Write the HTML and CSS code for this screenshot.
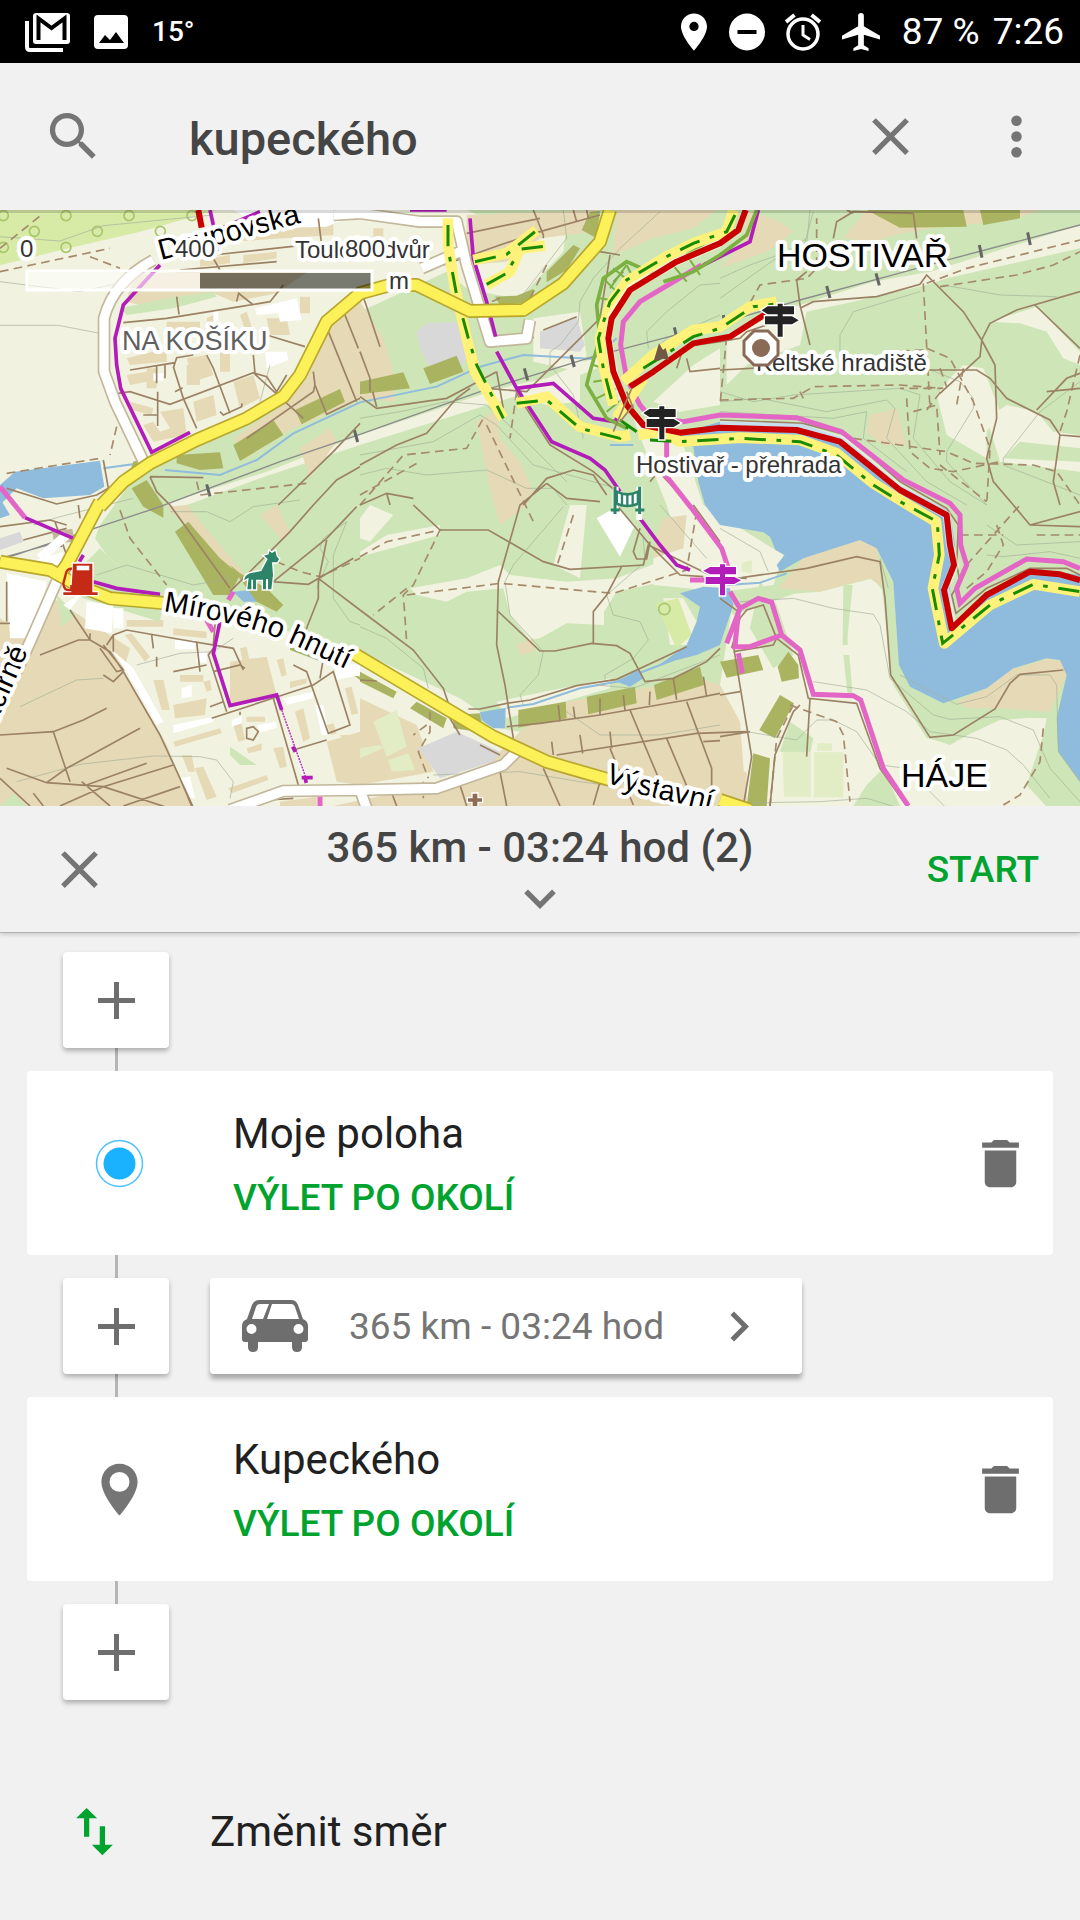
FILE: index.html
```html
<!DOCTYPE html>
<html lang="cs">
<head>
<meta charset="utf-8">
<meta name="viewport" content="width=device-width, initial-scale=1">
<title>Plánování trasy</title>
<link rel="stylesheet" href="styles.css">
</head>
<body>
<div class="status">
  <svg class="s-mail" viewBox="0 0 46 40" aria-hidden="true"><path d="M2 9v26q0 3 3 3h33" fill="none" stroke="#fff" stroke-width="4"/><rect x="8" y="1" width="37" height="31" rx="3" fill="#fff"/><path d="M13.500 28V6.500L26.500 16 39.500 6.500V28" fill="none" stroke="#000" stroke-width="4"/></svg>
  <svg class="s-image" viewBox="0 0 34 34" aria-hidden="true"><rect width="34" height="34" rx="4" fill="#fff"/><path d="M5 28l6-8 5 5 6-8 8 11z"/></svg>
  <span class="temp">15°</span>
  <div class="status-right">
    <svg class="s-pin" viewBox="5 2 14 20" aria-hidden="true"><path fill="#fff" d="M12 2C8.130 2 5 5.130 5 9c0 5.250 7 13 7 13s7-7.750 7-13c0-3.870-3.130-7-7-7zm0 9.500a2.500 2.500 0 1 1 0-5 2.500 2.500 0 0 1 0 5z"/></svg>
    <svg class="s-dnd" viewBox="0 0 36 38" aria-hidden="true"><ellipse cx="18" cy="19" rx="18" ry="18.500" fill="#fff"/><path d="M8.500 19h19" stroke="#000" stroke-width="4"/></svg>
    <svg class="s-alarm" viewBox="0 0 36 38" aria-hidden="true"><g fill="none" stroke="#fff"><circle cx="18" cy="21" r="15" stroke-width="3.500"/><path d="M18 12v10l7 4.500" stroke-width="3"/><path d="M1 9l8.500-7M35 9l-8.500-7" stroke-width="4"/></g></svg>
    <svg class="s-plane" viewBox="2 2 20 20" aria-hidden="true"><path fill="#fff" d="M22 16v-2l-8.500-5V3.500a1.500 1.500 0 0 0-3 0V9L2 14v2l8.500-2.500V19L8 20.500V22l4-1 4 1v-1.500L13.500 19v-5.500z"/></svg>
    <span class="battery">87 %</span>
    <span>7:26</span>
  </div>
</div>

<form class="search" role="search">
  <svg class="icon" viewBox="0 0 24 24" aria-hidden="true"><path d="M15.500 14h-.79l-.28-.27A6.470 6.470 0 0 0 16 9.500 6.500 6.500 0 1 0 9.500 16c1.610 0 3.090-.59 4.230-1.570l.27.28v.79l5 4.990L20.490 19l-4.990-5zm-6 0a4.500 4.500 0 1 1 0-9 4.500 4.500 0 0 1 0 9z"/></svg>
  <input class="query" type="text" value="kupeckého" aria-label="Hledat">
  <button type="button" class="plain" aria-label="Smazat"><svg class="icon" viewBox="0 0 24 24"><path d="M19 6.410L17.590 5 12 10.590 6.410 5 5 6.410 10.590 12 5 17.590 6.410 19 12 13.410 17.590 19 19 17.590 13.410 12z"/></svg></button>
  <button type="button" class="plain" aria-label="Více"><svg class="icon" viewBox="0 0 24 24"><circle cx="12" cy="6" r="2"/><circle cx="12" cy="12" r="2"/><circle cx="12" cy="18" r="2"/></svg></button>
</form>

<main>
<svg class="map" viewBox="0 0 1080 596" role="img" aria-label="Mapa">
<defs>
  <path id="p-doup" d="M161 50L300 13"/>
  <path id="p-mir" d="M163 401Q196 406 227 413T280 429 352 462"/>
  <path id="p-vys" d="M604 571Q635 584 664 590T730 606"/>
  <path id="p-sta" d="M-14 535Q16 470 36 422"/>
</defs>
<g transform="scale(.33333) translate(0 -15)">
  <rect class="forest" y="15" width="3240" height="1800"/>
  <!-- open land -->
  <g class="land">
    <path d="M0 180L480 60 640 15H1400L1500 60 1700 60 1690 140 1560 280 1490 270 1400 250 1340 200 1080 320 990 380 900 560 720 640 450 760 380 850 300 960 285 1000 320 1050 400 1130 480 1190 800 1260 1080 1340 1440 1560 1560 1580 2100 1440 2200 1700 2300 1815H0z"/>
    <path d="M500 895L800 800 1080 690 1500 550 1640 520 1800 450 1840 470 1740 510 1740 590 1640 600 1560 570 1080 720 780 820 520 915z"/>
    <path d="M1600 340L1740 320 1760 450 1740 500 1600 470z"/>
    <path d="M1080 1040L1160 990 1320 960V990L1080 1055zM1110 900L1180 930 1110 1010 1080 1000V940z"/>
    <path d="M1230 1150L1400 1120 1500 1080 1530 1110 1700 1130 1850 1120 1980 1070 1990 1130 1850 1160 1812 1220V1260L1700 1255 1620 1300 1590 1305 1530 1230 1510 1150 1400 1160 1340 1190 1250 1170z"/>
    <path d="M1710 900H1760L1740 1120 1660 1080z"/>
    <path d="M1900 640L2040 690 2110 900 2350 1050 2320 1140 2170 1160 1960 1140 1960 1060 2030 1000 2000 900 1960 800z"/>
    <path d="M1990 1180L2050 1180 2090 1250 2060 1320 2010 1320z"/>
    <path d="M2200 1180L2460 1160 2620 1120 2650 1160 2670 1420 2790 1600 2850 1620 3000 1535 3140 1540 3120 1650 3080 1740 3150 1815H2160V1440z"/>
    <path d="M2400 300L2620 230 2790 200 3240 60V130L2840 220 2780 240 2560 290 2420 320 2400 420 2240 480 2180 540V400L2340 320z"/>
    <path d="M2970 350L3110 305 3240 440V480L3190 460 3140 380 3060 355zM2890 480L2950 490 3000 620 2960 680 2960 760 2840 690 2810 570 2850 520zM2960 640L3020 600 3110 620 3160 680 3240 690V730L3060 710 3010 760 3240 770V800L3000 770z"/>
    <path d="M2080 480L2160 430V600L2040 620 1960 590z"/>
    <path d="M1490 1490L1830 1420 1830 1450 1520 1540zM1080 1340L1380 1480 1440 1520 1440 1560z"/>
  </g>
  <path class="orchard" d="M0 15H650L420 80 160 140 0 180z"/>
  <path class="orchard" d="M1965 1195L2035 1180 2075 1290 2030 1330z"/>
  <!-- built-up areas -->
  <g class="tan">
    <path d="M0 1240L80 1300 160 1180 390 1330 370 1400 500 1620 580 1815H0z"/>
    <path d="M1440 1700L1560 1580 1650 1500 2100 1420 2160 1440 2220 1550 2240 1815H1500z"/>
    <path d="M980 1610L1080 1580V1480L1250 1560 1300 1700 1080 1740 1010 1730zM1000 1803H2240V1700H1480L1300 1740z"/>
    <path d="M1400 30L1800 15 1780 80 1620 100 1520 170 1400 180z"/>
    <path d="M990 370L1080 290 1150 400 1180 500 1185 590 1080 580 950 640 860 680 740 760 700 700 850 600 920 520z"/>
    <path d="M1840 150L1850 15H2150L2080 70 1960 100z"/>
    <path d="M2240 15L2340 50 2380 80 2300 140 2160 190 2230 110zM2530 100L2600 15H3120L3020 50 2860 60 2700 85 2620 110z"/>
    <path d="M1430 650L1490 615 1500 700 1560 770 1600 860 1580 900 1500 960 1470 850z"/>
    <path d="M2335 1150L2410 1060 2580 1005 2630 1030 2650 1150 2610 1120 2460 1160z"/>
    <path d="M2870 1490L2960 1450 3030 1395 3150 1360 3190 1370 3200 1410 3150 1520 3000 1510 2900 1510z"/>
    <path d="M2610 630L2690 610 2720 720 2650 720 2600 680zM1990 940L2060 930 2050 1030 1960 1060 1970 990zM900 730L990 670 1010 710 930 820zM780 930L830 900 870 980 850 1010z"/>
    <path d="M400 210L640 195H930L830 265 700 290 640 265 420 300 380 290zM1550 1320L1600 1300 1600 1340 1560 1350z"/>
    <path d="M690 1370L800 1355 830 1470 690 1500zM740 60L1000 50V90L700 110z"/>
    <path d="M500 905L560 900 760 1140 700 1110z"/>
  </g>
  <g class="block">
    <path d="M500 350h100v40h-100zM380 460l120-30 0 40-110 10zM560 460l60-10 20 60-60 20zM660 440h30v60h-30zM720 330l20-10 20 60-20 10zM800 340l60 0 10 50-60 0zM900 275h30v50h-30zM380 510l60-10 0 30-50 10zM440 490h30v60h-30zM560 480h40v60h-40zM390 590l70 20-5 20-60-15zM480 620l70-10 10 80-100 20-30-50 30-10 20 30 30-10zM580 590l60-20 10 60-60 20zM700 530l60-20 20 70-60 30z"/>
    <path d="M380 1245h110v20H380zM520 1270l100 10v20l-100-10zM375 1290l20-5 55 70-15 15zM460 1425h30l20 90h-25zM520 1500l100-20-5 50-90 10zM540 1410h70v20h-70zM520 1610l140-40 5 15-140 40zM545 1650h30l10 50h-20zM585 1690l25-5 40 90-30 10zM700 1560l25-5 10 50-20 5zM685 1750l115-40 5 15-110 40zM740 1630l45-15v20l-40 10zM820 1630l30-5 10 60-20 5zM740 1535h55v15h-55zM720 1330l20-5 10 50-20 5zM830 1365l20-5 10 50-15 5zM870 1430l50-10v15l-50 15zM885 1520l25-10 20 90-20 10zM1035 1450l20-5 20 80-20 5zM980 1560l20-5 10 30-15 5zM610 1430l20-5 5 30-15 5zM1020 1590h60v40l-30 10zM1120 70h30v80h-30zM1100 1780h60v20h-60zM840 1790l110-15v28H840z"/>
    <path d="M730 150l100-10v20l-100 15zM600 165l90-15v25l-90 10zM620 340l20-10 10 40-20 10z"/>
  </g>
  <g class="park">
    <path d="M360 310L500 280 640 260 650 275 520 310 380 330zM690 1625L770 1680 720 1680 690 1650zM170 1170L230 1230 185 1265zM0 1803L40 1765 80 1803zM300 1030L380 1110 490 1190 480 1250 250 1180 190 1130 270 1060z"/>
    <path d="M2160 1180L2340 1150 2400 1160 2200 1230zM2280 1130L2330 1200 2380 1350 2320 1390 2250 1270zM2530 1140h28l-15 150 0 30h-15zM2530 1350h18l10 120h-15zM2640 1100L2670 1100 2700 1400 2830 1500 3140 1535 3000 1545 2850 1615 2780 1600 2680 1440zM2340 1640L2370 1550 2440 1600 2430 1650zM2600 1740L2650 1690 2700 1803H2560zM3200 1410L3170 1540 3180 1650 3240 1730V1815H3150L3080 1740 3140 1560z"/>
  </g>
  <g class="field">
    <path d="M2348 1640h84v135h-80zM2442 1642h88v135h-88zM2452 1615h44v22h-44zM1120 1550l70-35 30 110-60 30zM1165 1665l60-20 20 50-70 5zM1080 1630l60-10 10 10-70 30zM2225 1075l30-10v40l-30-5z"/>
  </g>
  <!-- water -->
  <g class="water">
    <path d="M1990 700L2160 650 2400 655 2530 700 2700 840 2850 920 2865 1020 2850 1150 2855 1270 2960 1180 3100 1090 3240 1110V1730L3175 1640 3170 1540 3200 1410 3180 1365 3140 1360 3040 1390 2960 1450 2830 1495 2730 1445 2697 1380 2680 1130 2630 1030 2580 1005 2410 1060 2340 1100 2330 1080 2354 1050 2326 1034 2310 995 2290 982 2160 960 2115 900 2095 830 2080 725z"/>
    <path d="M2040 1165L2110 1145 2190 1150 2200 1200 2160 1320 2090 1350 2010 1370 1970 1385 2060 1320 2090 1250 2100 1205z"/>
    <path d="M0 840L45 800 300 767 313 845 270 870 130 880 50 850 0 900zM0 880L30 930 0 940zM1440 1522L1517 1508 1515 1570 1480 1570 1445 1545zM1850 1430L1915 1395 1930 1420 1890 1445zM700 1160L750 1155 790 1190 730 1190z"/>
  </g>
  <g class="stream">
    <path d="M495 795L660 810 770 765 880 685 1080 592 1310 545 1440 485 1570 450 1780 462 1850 400M310 790L420 775M1520 1508L1600 1497 1740 1450 1850 1430 2020 1365M2180 1140L2280 1133 2360 1105M1830 720L1900 720"/>
  </g>
  <g class="grey"><path d="M1250 380L1280 355 1390 350 1420 400 1390 480 1290 490 1260 430zM1620 380L1730 335 1755 420 1740 440 1620 430zM1255 1630L1370 1580 1500 1640 1480 1670 1320 1720zM0 1000L60 980 70 1010 0 1035z"/></g>
  <g class="olive">
    <path d="M530 750L660 742 670 790 600 795 530 775zM700 720L820 645 850 690 720 768zM885 615L1020 552 1035 590 905 658zM525 980L565 950 660 1060 720 1110 690 1170 640 1170zM690 1080L720 1105 800 1150 850 1200 830 1220 770 1190zM395 850L440 825 490 900 490 938 430 905zM415 765L440 800 380 830 400 770z"/>
    <path d="M1080 530L1210 502 1230 550 1080 568zM1270 490L1370 452 1390 500 1290 537zM1485 275L1550 272 1600 252 1600 290 1500 300zM1640 200L1720 120 1740 130 1700 195 1640 232zM1770 20L1800 18 1790 100 1745 75zM2600 15L2700 68 2900 65 2890 15zM2940 15L3060 15 3060 40 2950 60z"/>
    <path d="M1080 1400L1190 1460 1180 1480 1080 1430zM1230 1510L1250 1490 1340 1540 1330 1570zM1360 1570L1360 1530 1440 1525 1445 1560 1500 1590zM1555 1515L1697 1490 1700 1540 1555 1568zM1760 1475L1905 1445 1910 1495 1765 1528zM1962 1440L2100 1385 2112 1440 1970 1485zM2160 1370L2275 1350 2290 1395 2180 1418zM2333 1385L2365 1340 2395 1380 2397 1420 2345 1430zM2340 1470L2382 1495 2325 1600 2278 1575zM2260 1645L2310 1660 2300 1803H2240zM870 1320L1000 1370 990 1380 870 1335zM1060 1410L1080 1415V1425z"/>
  </g>
  <g class="hall"><path d="M765 310L890 280 905 345 840 350 835 325 770 330zM795 440L860 440 865 465 800 490zM460 505h30v22h-30zM640 315h15v40h-15zM700 15h400l-120 50-180 5zM75 1075L190 1040 180 1080 90 1085zM20 1105L140 1130 110 1300 30 1300zM260 1190L340 1200 335 1285 255 1270zM340 1210h30v60h-30zM330 1330L400 1390 490 1550 470 1560 380 1400zM520 1560L640 1535 640 1550 520 1585zM545 1450l30-10v35l-30 5zM590 1340h30v35l-30-5zM525 1305h60v28h-60zM850 1480L940 1460V1480L860 1500zM945 1500L970 1500 985 1590 965 1590zM1000 1370L1080 1380V1410L1010 1425zM1790 940L1850 905 1905 960 1860 1055zM770 1560l60-10v18l-50 15zM540 1720L570 1715 585 1780 560 1775zM695 1545l30-10v20l-30 10zM250 1160L190 1200 210 1215zM830 1540L930 1730 915 1740 885 1640z"/></g>
  <g class="rings"><circle cx="10" cy="32" r="15"/><circle cx="198" cy="32" r="15"/><circle cx="387" cy="32" r="15"/><circle cx="576" cy="32" r="15"/><circle cx="103" cy="79" r="15"/><circle cx="292" cy="79" r="15"/><circle cx="481" cy="79" r="15"/><circle cx="10" cy="127" r="15"/><circle cx="198" cy="127" r="15"/><circle cx="1993" cy="1212" r="17"/></g>
  <!-- contours -->
  <g class="contour">
    <path d="M0 95L180 108 310 62 640 30M0 230L240 260 400 225M0 361H175L300 385M60 1505L230 1425 310 1420M50 1730L240 1678 460 1653 600 1655 650 1665 700 1730 690 1780M290 1110L380 1080 580 1140 690 1120M410 1380L540 1345 640 1340M700 1300L640 1340M100 960L180 935 400 880M780 590L810 480M510 920L620 920 690 950 760 905 900 885M1040 950L970 1000 960 1030 985 1070 950 1150M1040 950L1000 1050V1180L1050 1250 1080 1260"/>
    <path d="M1080 750L1300 710 1440 630 1490 660 1600 780 1850 850M1080 810L1160 790 1280 810 1460 795 1580 850 1660 850 1700 900M1080 640L1200 620 1340 590 1460 600 1560 690 1700 830M1690 15L1700 100 1560 280M1980 20L1860 130 1780 220 1740 290 1735 350 1680 420 1650 440 1650 480 1720 570 1750 700M1080 1265L1160 1300 1270 1390 1285 1450M1690 905L1540 1080 1515 1130 1530 1230 1630 1340 1615 1410 1560 1470 1570 1500M1980 900L2120 1060M1930 1000L1935 1070 1820 1170 1840 1230 1920 1250 1945 1305 1900 1360 1815 1410V1430M1790 1440L1900 1450 2160 1350M1300 1710L1560 1700 1740 1730 1850 1745M1700 1520L1800 1590 1980 1590 2160 1560"/>
    <path d="M2160 280L2300 180 2420 100M2160 220L2250 180 2420 120 2430 15M2160 560L2260 590 2380 570 2700 550 2760 570 2740 700 2850 830 2960 900M2160 590L2280 580 2480 620 2660 585 2685 610 2660 700 2780 830 2900 900M2160 620L2500 640 2600 620 2590 700 2720 800M2520 440V390L2560 320 2760 260M2830 240L3000 270 3170 275M2780 490L2880 530 2920 580 2920 610 2840 740V770L2960 900M2960 960L3050 1020 3240 1010M3240 530L3120 620 3010 760V780L3240 870M2440 20L2410 130M1940 460L2000 400 2160 330M1945 430L1940 380 2000 320 2100 240 2160 235M2160 970L2280 1040 2305 1100M2220 1190L2380 1180 2500 1210 2620 1228 2640 1260 2670 1420 2800 1530 2850 1543 3000 1535 3100 1575 3150 1690 3240 1790M2240 1580L2390 1605 2450 1545 2500 1545 2570 1580 2640 1680 2720 1690 2850 1820M2440 1430L2600 1455 2720 1520 2790 1580 2930 1600 3020 1635 3070 1680 3150 1780M2180 1795L2460 1790 2600 1780 2700 1810M2960 1050L3010 1055 3150 1040 3240 1060M2700 1410L2870 1498 2960 1475 3050 1410 3150 1410 3170 1440 3175 1640 3240 1730M2640 1060L2665 1150"/>
  </g>
  <!-- railway -->
  <path class="rail" d="M0 1065L290 968 480 905 840 770 1080 688 1440 560 1780 455 2160 355 2400 285 2660 215 2860 160 3240 60M0 1060L180 1010"/>
  <path class="tick" d="M620 838l10 36M1063 675l10 36M1573 490l10 36M1713 450l10 36M2023 367l8 34M2170 330l4 26M2480 243l10 36M2628 205l10 36M2938 120l8 38M3083 82l8 38M175 990l8 36"/>
  <!-- footpaths -->
  <g class="dash">
    <path d="M0 200L330 130M0 130L130 25M270 155L360 190M20 805L300 760M350 665L330 750M590 830L600 870 920 835M360 915L390 1000 500 1140M830 1070L900 1100 960 1115 1080 1060"/>
    <path d="M1080 900L1210 750 1400 730 1450 640M1460 660L1600 950M1550 560L1530 700M1080 870L1260 770M1640 180L1580 300M1080 1055L1160 1010 1320 975 1240 1140 1210 1170 1220 1310M1220 1170L1500 1135 1840 1165 2060 1095 2090 920M1720 930L1670 1085M1220 1150L1120 1230M1500 280L1450 300"/>
    <path d="M2770 235L2790 610M2780 235L2900 190 3240 105M2820 245L3050 210 3160 180 3240 140M2230 330L2280 240 2420 220 2450 190V40M2160 585L2380 580 2440 545 2700 540 2830 550 2700 550M2410 580L2400 560M2740 620L2810 600 2820 750M2720 580L2730 740 2790 790 2860 800 3000 770M2560 700L2700 720 2840 740 2920 775 3100 780 3170 800 3240 900M2780 615L2830 550M2780 430L2850 460 2920 590 2970 730 2960 900M2770 435L2660 440M2890 490L2870 600M2820 490L2840 545M3240 450L3200 620 3180 680M2820 780L2960 890M2880 990H3010M2990 960L3010 1020 2960 1100 2900 1150M2900 1080L3060 900M3110 990H3240M2370 1500L2510 1550 2530 1590 2550 1790M2380 1500L2330 1600 2310 1803M3130 1570L3120 1670 3060 1770 3010 1800M2180 395L2160 600"/>
    <path d="M1290 1520L1290 1580 1255 1640 1285 1720M1270 1730V1780M1280 1560L1240 1590"/>
  </g>
  <!-- minor roads and tracks -->
  <g class="path">
    <path d="M370 353L500 340 720 305 810 290 850 240M530 275L537 328M640 150L960 115M540 195L830 170M710 290L716 265 760 300M390 495L525 473 530 458 580 450M520 485L550 580 590 670M525 473L520 490M620 450L640 490 690 625M355 565L390 560 510 598 760 503 910 640M470 480V535M473 560V663M430 630H473M800 390L915 425M760 450L765 505 800 515 830 560 860 510M985 380L1070 590M940 500L945 540 940 560 740 700M945 540L980 628 1080 580M1035 330L1075 430M660 620L670 630 725 605 726 595M495 480V520M525 560L548 548M640 160L660 195M955 40L965 120"/>
    <path d="M310 765L325 850 290 870 170 897 20 850M450 815L470 860 510 900M450 815L610 818M510 900L690 1150M835 900L1000 740 1080 655M940 900L1010 825 1080 785M0 965L150 945 200 960M235 900L240 940M1070 905L980 1000 820 1130M940 900L870 980 690 1160M815 1130L925 1138 1060 1060M980 1005L955 1130V1180L900 1320M955 1120L1080 1215M165 950L210 1080M70 1005L200 970"/>
    <path d="M210 1215L270 1305 330 1340 370 1400 480 1590 540 1720 575 1803M120 1350L235 1305H270V1285M320 1320L340 1290 380 1275 550 1305 700 1330 730 1395M300 1330L350 1400 370 1395 310 1320M310 1410L340 1430 370 1400M0 1590L160 1580 250 1545 320 1510M160 1580L210 1730M20 1690L140 1733 310 1745 540 1820M140 1733L200 1690 420 1570M180 1803L310 1745 520 1680M245 1730L330 1803M260 1740L440 1675M370 1803L540 1745M0 1720L90 1803M455 1290L460 1330M470 1355V1385M520 1400L620 1380M540 1720L590 1830M590 1310L600 1400M640 1330L625 1350 680 1520M640 1400L720 1380 735 1390M635 1540L940 1440 1000 1400 1050 1560 985 1585 920 1400 880 1380M820 1480L895 1740M880 1635L980 1605M740 1570l20-5 15 15-15 25-20-5zM970 1360L960 1420M20 1130V1250M0 1255H30M0 1383H40M650 1200L640 1320M340 1290V1340M630 1505L670 1490M720 1520V1530M800 1785L880 1780M100 1765L130 1803"/>
    <path d="M1330 180L1500 120 1620 80 1800 30M1400 85L1620 40M1600 15L1630 90 1630 100M1720 15L1730 50M1760 15L1765 40M1080 250L1095 290 1140 425M1080 440L1110 520V560M1118 560L1130 605M1080 575L1130 610 1340 580 1490 500M1080 780L1190 720 1280 685 1370 580 1410 550M1080 900L1160 865 1240 880M1160 865L1170 900M1490 500L1510 610M1460 550L1580 560 1800 340 1830 150M1630 375L1730 335M1570 900L1640 820 1720 795 1780 810 1820 870M1640 835L1700 880 1800 890M1640 835L1560 900 1495 1130 1490 1320 1515 1440 1540 1600M1550 565L1650 720 1780 800 1860 870M1590 380L1600 400M1490 1215L1620 1338H1665L1775 1315 1850 1322 1890 1345 1935 1430 2020 1420 2120 1370 2160 1330M1240 900L1320 975H1465L1630 1070 1710 1093 1930 1080 1945 1020 2140 1115 2240 1120M1865 1085L1820 1170 1780 1220V1315M1080 1215L1240 1335 1330 1450 1350 1510M1405 1512H1440L1520 1495 1590 1485 1730 1442 1850 1423 2060 1325M1920 970L1900 1040 1910 1062H1940L1950 1010M1850 900L1950 1020 2040 1110 2110 1115M1520 1565L1620 1555 1800 1530 2060 1485 2160 1465M1670 1650L2090 1585 2240 1580M1890 1515L1980 1730 2040 1803M2060 1490L2135 1690V1803M2000 1600L2080 1790M1950 1460L1948 1500M2020 1420L2030 1485M2110 1415L2120 1475M1675 1500L1680 1550M1720 1505L1725 1540M1800 1480V1530M1870 1470L1875 1515M1655 1610L1660 1650M1740 1590L1748 1645M1830 1580L1835 1630M1830 1630L1900 1800M1500 1700L1520 1803M1630 1690L1680 1803M1380 1740L1400 1803M1170 1750L1190 1803M1780 1800L1800 1730M1350 1540L1380 1590M2160 1607L2110 1610M1440 1620L1500 1650M1080 1425L1130 1428"/>
    <path d="M2390 225L2400 300 2430 420M2390 225L2420 200M2400 310L2440 290 2630 275 2760 238 2780 210 2890 320 2945 405 2985 480 2990 640 2960 760 2980 830 3040 900M2945 405L2970 355 3050 315 3240 260M3105 300L3240 430M2945 410L2940 455 2820 565M2160 495L2340 485M2780 495H2930L2970 520 3020 580 3150 645 3180 690 3240 695M3110 615L3200 520 3240 505M3180 690L3160 830 3180 900M2160 410L2220 400 2240 380 2300 360M2500 100L2510 50 2560 20 2740 25 2750 100M2560 25L2540 15M3140 560L3240 550M2160 645L2410 655 2540 690 2700 830 2840 910 2875 960 2870 1080 2880 1130 2855 1170 2868 1225 2960 1150 3090 1090H3200L3240 1110M2225 1118L2420 1090 2570 1055 2640 1070 2655 1180 2672 1410 2790 1597 2860 1590 2985 1512 3030 1435 3060 1408 3190 1395M2160 1180L2215 1220 2200 1320 2255 1655 2230 1803M2200 1340L2320 1320 2330 1300 2290 1200 2240 1215 2220 1240 2195 1330M2330 1300L2395 1350 2425 1480 2570 1495 2640 1690 2720 1803M2160 1470L2220 1460M2160 1595L2250 1580M3040 900L3090 960 3240 965M3090 960L3240 920M2310 1803L2325 1650 2380 1520M2380 1520L2400 1500M2420 1655L2430 1480"/>
    <path d="M2030 490L2050 430 2090 420 2160 410M2060 460L2070 500 2160 490M1860 150L1800 140M1840 230L1870 200M1990 780L1950 830M2080 900L2160 1010M1985 810L2070 900"/>
  </g>
  <!-- white streets -->
  <g fill="none" stroke-linejoin="round">
    <path class="casing" d="M460 165Q340 230 312 340V500L345 590 440 790M1000 30L1080 25 1260 50 1370 50 1400 180 1470 410 1580 400 1590 345M1265 190L1380 140M170 1130L95 1300 50 1400M690 1815L850 1758 1080 1755 1310 1750 1510 1680 1550 1640M1080 1755L1100 1810M160 1000L220 990"/>
    <path class="white" d="M460 165Q340 230 312 340V500L345 590 440 790M1000 30L1080 25 1260 50 1370 50 1400 180 1470 410 1580 400 1590 345M1265 190L1380 140M170 1130L95 1300 50 1400M690 1815L850 1758 1080 1755 1310 1750 1510 1680 1550 1640M1080 1755L1100 1810M200 990L120 1060"/>
  </g>
  <!-- purple trail -->
  <g class="purple">
    <path d="M630 15L640 60M640 80L780 20M480 180L370 300 345 400 350 480 362 550 455 742 570 682M1410 40L1420 160 1460 290 1487 395M1490 440L1550 550 1655 710 1770 760 1815 795 1860 860M1550 550L1660 535 1780 640 1845 650 1875 595M2275 15L2250 110 2110 180M1230 15H1340"/>
    <path d="M1920 940L1980 1020 2030 1080 2070 1095M250 1050L238 1070M75 938L220 1000M280 1130L350 1150 480 1168M660 1250L640 1345 690 1502 830 1470 845 1515M878 1625l8 16M905 1718H938M915 1718l4 16"/>
    <path class="thin" d="M845 1515L920 1725"/>
  </g>
  <!-- pink trail -->
  <g class="pink">
    <path d="M0 845L75 938M2105 180L1920 290 1870 350 1862 420 1880 520 1920 600 1950 635 2050 650 2160 630 2390 638 2525 680 2710 825 2850 895 2880 930 2882 1020 2900 1080 2870 1150 2880 1195 2925 1150 3080 1062 3190 1070 3240 1090M2000 660V815L2075 910 2165 1030 2185 1090M2070 1125H2120M2190 1160L2220 1210 2275 1180 2315 1192 2345 1290 2400 1335 2440 1468 2560 1472 2582 1485 2650 1690 2725 1803M2220 1210L2180 1315M2215 1220L2205 1325 2250 1325 2345 1290M2215 1345L2227 1405M700 1160L685 1185M620 1245L640 1280M960 1775V1815"/>
  </g>
  <!-- bushes by the stream -->
  <g class="bush">
    <path d="M1970 210L1880 170 1810 220 1790 300 1800 400 1770 500 1760 540 1820 640 1880 670M2060 150L2150 90M1990 230L2080 200 2160 150 2240 90 2270 15"/>
    <path class="thin" d="M1810 220l60 60M1840 190l60 50M1800 280l60 10M1790 330l60 0M1780 480l60 20M1780 530l70 -10M1790 580l60 -30M1820 620l50 -40M2010 170l50 60M2060 150l40 60M1880 180l30 60M1830 250l50 -70"/>
  </g>
  <!-- yellow marked trail -->
  <g class="band">
    <path d="M1344 40V120L1365 250 1400 400 1425 500 1510 640M1420 165L1520 145 1610 75M1460 240L1530 200 1560 130 1635 122M1550 595L1640 575 1740 665 1860 695 1890 690M1915 690L1980 680 2040 710 2220 698 2400 705 2510 745 2620 835 2700 885 2808 950 2818 1050 2799 1150 2833 1315 2970 1200 3100 1138 3240 1160M2200 15L2180 80 2080 115 1990 160 1880 230 1830 300 1800 400 1810 480 1840 600M1870 530L1960 450 2080 375 2160 365 2250 305 2330 290M1850 640L1930 520"/>
  </g>
  <g class="green">
    <path d="M1344 60V130L1370 270 1405 400 1430 480 1510 640M1425 170L1520 148 1605 80M1565 132L1635 124M1460 238L1520 205 1545 160M1550 595L1640 585 1740 670 1860 700 1900 640M1860 645L1910 680M1950 705L2040 710 2220 700 2400 710 2510 750 2620 840 2700 890 2812 950 2818 1050 2797 1150 2828 1315 2970 1200 3100 1138 3240 1160M2205 30L2180 80 2080 115 1990 160 1880 225 1830 290 1795 400 1810 490 1840 605M1930 490L2080 395 2160 370 2260 305 2320 298"/>
  </g>
  <!-- red trail -->
  <path class="red-case" d="M2160 115L2030 170 1890 250 1835 330 1825 400 1840 500 1870 590M2160 660L2400 668 2525 705 2700 850 2840 930 2850 1020 2865 1080 2835 1150 2858 1265"/>
  <path class="red" d="M595 15L605 68M2237 15L2215 75 2160 115 2030 170 1890 255 1835 340 1825 400 1840 500 1880 600 1930 660 2040 683 2160 668 2390 675 2520 710 2700 855 2840 930 2850 1020 2862 1080 2832 1155 2855 1270 2960 1170 3090 1100 3180 1108 3240 1125M1890 545L1960 500 2080 415 2190 395 2300 325"/>
  <path class="path" d="M1895 550L1840 680M1900 610L1880 560M1860 650L1900 600"/>
  <!-- yellow main roads -->
  <g class="main-case"><path d="M300 905L370 830 450 775 590 705 740 640 850 575 900 510 980 350 1080 265 1170 240 1250 240 1410 318 1570 315 1690 235 1800 110 1830 15M0 1070L150 1095 230 1140 330 1180 500 1195M300 890L200 1080 170 1120M1060 1345L1480 1595 1640 1670 1830 1725M2160 1785L2250 1815"/></g>
  <g class="main"><path d="M300 905L370 830 450 775 590 705 740 640 850 575 900 510 980 350 1080 265 1170 240 1250 240 1410 318 1570 315 1690 235 1800 110 1830 15M0 1070L150 1095 230 1140 330 1180 500 1195M300 890L200 1080 170 1120M1060 1345L1480 1595 1640 1670 1830 1725M2160 1785L2250 1815"/></g>
  <!-- peak -->
  <path fill="#705846" d="M1962 465l15-50 12 20 8-6 10 36-18-4-14 6z"/>
  <!-- signposts -->
  <path id="sign" class="halo" fill="#232323" d="M1993 604h-15v8h-30l-18 12 18 12h30v6h-38v24h38v37h15v-37h28l20-12-20-12h-28v-6h34v-24h-34z"/>
  <use href="#sign" x="355" y="-308"/>
  <path class="halo" fill="#b21cb8" d="M2160 1078h15v8h33v22h-33v8h28l20 10-20 11h-28v34h-15v-34h-43v-21h43v-8h-30l-20-11 20-11h30z"/>
  <!-- playground -->
  <g fill="none" stroke="#fff" stroke-width="18"><path d="M1847 845v100M1918 845v100"/></g>
  <g fill="#fff" stroke="#2d8468" stroke-width="9"><path d="M1845 845v82M1919 845v82M1832 915h27M1906 915h27"/><path d="M1850 860q32 16 64 0v36q-32 14-64 0z" stroke-width="8"/><path d="M1866 866v34M1882 870v34M1898 866v34" stroke-width="7"/></g>
  <!-- zoo -->
  <path class="halo" fill="#2d8468" d="M742 1153L746 1118 732 1126Q734 1106 758 1103L784 1098 803 1062 792 1052 806 1048 808 1038 816 1044 826 1038 830 1054 837 1062 832 1072 816 1072 819 1110 814 1153H804V1122H798V1153H789V1124H768V1153H759V1124H754V1153z"/>
  <!-- fuel -->
  <g class="halo" fill="#c52a16"><path d="M219 1076h58v86h16v8H190v-8h24z"/></g>
  <path fill="none" stroke="#c52a16" stroke-width="7" d="M214 1140v15q-24 4-24-20l8-30q2-14 18-14"/><path fill="#fff" d="M230 1082h38v14h-38z"/>
  <path class="halo" fill="#8f6a55" d="M1418 1766h14v14h14v10h-14v25h-14v-25h-14v-10h14z"/>
</g>
<!-- scale bar -->
<g>
  <rect x="29" y="63" width="171" height="16" fill="#fff" fill-opacity=".6"/>
  <rect x="200" y="63" width="171" height="16" fill="#000" fill-opacity=".5"/>
  <rect x="27" y="61" width="345" height="19" fill="none" stroke="#fff" stroke-width="3"/>
</g>
<!-- labels -->
<g class="label">
  <text class="street"><textPath href="#p-doup">Doupovská</textPath></text>
  <text class="street"><textPath href="#p-mir">Mírového hnutí</textPath></text>
  <text class="street"><textPath href="#p-vys">Výstavní</textPath></text>
  <text class="street"><textPath href="#p-sta">stácírně</textPath></text>
  <text class="place" x="295" y="48">Toulcův dvůr</text>
  <text class="place" x="756" y="161">Keltské hradiště</text>
  <text class="place" x="636" y="263">Hostivař - přehrada</text>
  <text class="quarter" x="122" y="140">NA KOŠÍKU</text>
  <text class="town" x="777" y="57">HOSTIVAŘ</text>
  <text class="town" x="901" y="577">HÁJE</text>
  <text class="scale" x="20" y="47">0</text>
  <text class="scale" x="175" y="47">400</text>
  <text class="scale" x="345" y="47">800</text>
  <text class="scale" x="389" y="79">m</text>
</g>
<path d="M754 121h14l10 10v14l-10 10h-14l-10-10v-14z" fill="#fff" stroke="#8a6a57" stroke-width="3"/><circle cx="761" cy="138" r="9" fill="#8a6a57"/>
<rect class="top-shade" width="1080" height="3"/>
</svg>

<header class="summary">
  <button type="button" class="plain dismiss" aria-label="Zavřít"><svg class="icon" viewBox="0 0 24 24"><path d="M19 6.410L17.590 5 12 10.590 6.410 5 5 6.410 10.590 12 5 17.590 6.410 19 12 13.410 17.590 19 19 17.590 13.410 12z"/></svg></button>
  <div class="summary-mid">
    <h1>365 km - 03:24 hod (2)</h1>
    <svg class="down" viewBox="6 8 12 8" aria-hidden="true"><path d="M7.410 8.590L12 13.170l4.590-4.580L18 10l-6 6-6-6z"/></svg>
  </div>
  <button type="button" class="plain start">START</button>
</header>

<ol class="route">
  <li class="row"><button type="button" class="raised add" aria-label="Přidat bod"><svg viewBox="0 0 37 37"><path d="M16 0h5v16h16v5H21v16h-5V21H0v-5h16z"/></svg></button></li>
  <li class="link" aria-hidden="true"></li>
  <li class="card">
    <svg class="icon" viewBox="0 0 63 63" aria-hidden="true"><circle cx="31.500" cy="31.500" r="23" fill="#fff" stroke="#4cc2ff" stroke-width="1.500"/><circle cx="31.500" cy="31.500" r="16" fill="#1ab2ff"/></svg>
    <div class="stop"><h2>Moje poloha</h2><a href="#okoli-poloha">VÝLET PO OKOLÍ</a></div>
    <button type="button" class="plain" aria-label="Odstranit"><svg class="icon dark" viewBox="0 0 24 24"><path d="M6 19c0 1.100.9 2 2 2h8c1.100 0 2-.9 2-2V7H6zM19 4h-3.500l-1-1h-5l-1 1H5v2h14z"/></svg></button>
  </li>
  <li class="link" aria-hidden="true"></li>
  <li class="row">
    <button type="button" class="raised add" aria-label="Přidat bod"><svg viewBox="0 0 37 37"><path d="M16 0h5v16h16v5H21v16h-5V21H0v-5h16z"/></svg></button>
    <button type="button" class="raised leg">
      <svg class="car" viewBox="0 0 66 52" aria-hidden="true"><path fill-rule="evenodd" d="M17 0h32q5 0 7 5l5 14q5 2 5 7v13q0 3-3 3h-3v5q0 5-5 5t-5-5v-5H16v5q0 5-5 5t-5-5v-5H3q-3 0-3-3V26q0-5 5-7l5-14q2-5 7-5zm1 4q-3 0-4 3L10 19h11l6-15zm12 0l-5 15h32L53 7q-1-3-4-3zM9.500 24a5 5 0 1 0 0 10 5 5 0 0 0 0-10zm47 0a5 5 0 1 0 0 10 5 5 0 0 0 0-10z"/></svg>
      <span>365 km - 03:24 hod</span>
      <svg class="next" viewBox="8 6 8 12" aria-hidden="true"><path d="M10 6L8.590 7.410 13.170 12l-4.580 4.590L10 18l6-6z"/></svg>
    </button>
  </li>
  <li class="link" aria-hidden="true"></li>
  <li class="card">
    <svg class="icon" viewBox="0 0 24 24" aria-hidden="true"><path fill-rule="evenodd" d="M12 2.200C8.130 2.200 5.100 5.230 5.100 9.100 5.100 14.250 12 21.900 12 21.900s6.900-7.650 6.900-12.800c0-3.870-3.030-6.900-6.900-6.900zm0 3.100a3.800 3.800 0 1 0 0 7.600 3.800 3.800 0 0 0 0-7.600z"/></svg>
    <div class="stop"><h2>Kupeckého</h2><a href="#okoli-kupeckeho">VÝLET PO OKOLÍ</a></div>
    <button type="button" class="plain" aria-label="Odstranit"><svg class="icon dark" viewBox="0 0 24 24"><path d="M6 19c0 1.100.9 2 2 2h8c1.100 0 2-.9 2-2V7H6zM19 4h-3.500l-1-1h-5l-1 1H5v2h14z"/></svg></button>
  </li>
  <li class="link" aria-hidden="true"></li>
  <li class="row"><button type="button" class="raised add" aria-label="Přidat bod"><svg viewBox="0 0 37 37"><path d="M16 0h5v16h16v5H21v16h-5V21H0v-5h16z"/></svg></button></li>
</ol>

<button type="button" class="plain swap">
  <svg class="icon" viewBox="0 0 24 24" aria-hidden="true"><path d="M16 17.010V10h-2v7.010h-3L15 21l4-3.990zM9 3L5 6.990h3V14h2V6.990h3z"/></svg>
  Změnit směr
</button>
</main>
</body>
</html>
```
FILE: styles.css
```css
* { box-sizing: border-box; }
body {
  margin: 0;
  background: #f1f1f1;
  color: #212121;
  font-family: Roboto, "Liberation Sans", sans-serif;
  font-size: 42px;
}
svg { display: block; flex: none; }
h1, h2 { margin: 0; font-size: 42px; }
.plain {
  border: 0;
  padding: 0;
  background: none;
  color: inherit;
  font: inherit;
  cursor: pointer;
}
.icon { width: 63px; height: 63px; fill: #757575; }
.dark { fill: #6e6e6e; }

/* status bar */
.status {
  display: flex;
  align-items: center;
  height: 63px;
  padding: 0 16px 0 25px;
  background: #000;
  color: #fff;
  font-size: 37px;
}
.status-right { display: flex; align-items: center; margin-left: auto; }
.s-mail { width: 46px; height: 40px; margin-right: 23px; }
.s-image { width: 34px; height: 34px; margin-right: 24px; }
.temp { font-size: 28px; font-weight: 500; }
.s-pin { width: 26px; height: 38px; margin-right: 22px; }
.s-dnd { width: 36px; height: 38px; margin-right: 20px; }
.s-alarm { width: 36px; height: 38px; margin-right: 21px; }
.s-plane { width: 38px; height: 40px; margin-right: 22px; }
.battery { margin-right: 13px; }

/* search bar */
.search {
  display: flex;
  align-items: center;
  gap: 63px;
  height: 147px;
  padding: 0 32px 0 42px;
}
.query {
  flex: 1;
  min-width: 0;
  border: 0;
  padding: 4px 0 0 21px;
  background: none;
  color: #454545;
  font: 500 47px/63px Roboto, "Liberation Sans", sans-serif;
  outline: none;
}

/* map */
.map { width: 100%; height: auto; background: #cee5b7; }
.forest, .park { fill: #cee5b7; }
.land { fill: #f1f2df; }
.orchard { fill: #d7eaa6; }
.field { fill: #e2ecc5; }
.tan, .block { fill: #e6d9b6; }
.water { fill: #8fbcdd; }
.grey { fill: #d8d8d8; }
.olive { fill: #a9b360; }
.hall { fill: #fff; }
.stream, .rings, .contour, .rail, .tick, .dash, .path, .casing, .white,
.purple, .pink, .bush, .band, .green, .red, .red-case, .main, .main-case { fill: none; }
.stream { stroke: #8fbcdd; stroke-width: 6; }
.rings { stroke: #a8c66b; stroke-width: 5; }
.contour { stroke: #a3b198; stroke-width: 2; }
.rail { stroke: #8b8b8b; stroke-width: 4; }
.tick { stroke: #666; stroke-width: 9; }
.path { stroke: #9c8265; stroke-width: 5; }
.dash { stroke: #a58a6c; stroke-width: 5; stroke-dasharray: 26 16; }
.casing { stroke: #c3b79b; stroke-width: 38; }
.white { stroke: #fff; stroke-width: 28; }
.purple { stroke: #b21cb8; stroke-width: 11; }
.purple .thin { stroke-width: 4; stroke-dasharray: 6 3; }
.pink { stroke: #e366c7; stroke-width: 15; }
.bush { stroke: #7cb040; stroke-width: 11; }
.bush .thin { stroke-width: 6; }
.band { stroke: #fff27a; stroke-width: 32; stroke-linejoin: round; }
.green { stroke: #188b00; stroke-width: 9; stroke-dasharray: 64 32 14 32; }
.red { stroke: #ca0000; stroke-width: 18; stroke-linejoin: round; }
.red-case { stroke: #fff; stroke-width: 24; stroke-opacity: .5; }
.main-case { stroke: #b8a72c; stroke-width: 42; stroke-linejoin: round; }
.main { stroke: #fcf158; stroke-width: 32; stroke-linejoin: round; }
.halo { stroke: #fff; stroke-width: 8; paint-order: stroke; }
.label {
  fill: #222;
  stroke: #fff;
  stroke-width: 8px;
  stroke-linejoin: round;
  paint-order: stroke;
  font-family: "Liberation Sans", sans-serif;
}
.street { font-size: 29px; fill: #000; }
.place { font-size: 24px; fill: #333; }
.quarter { font-size: 27px; fill: #606060; }
.town { font-size: 34px; fill: #000; }
.scale { font-size: 24px; fill: #333; }
.top-shade { fill: #000; fill-opacity: .15; }

/* route summary */
.summary {
  display: grid;
  grid-template-columns: 1fr auto 1fr;
  align-items: center;
  height: 127px;
  border-bottom: 1px solid #b3b6b3;
  box-shadow: 0 2px 4px rgba(0, 0, 0, .15);
}
.dismiss { justify-self: start; margin-left: 48px; }
.summary-mid {
  display: flex;
  flex-direction: column;
  align-items: center;
  align-self: start;
  gap: 16px;
  padding-top: 18px;
}
h1 { color: #454545; font-weight: 500; line-height: 48px; }
.down { width: 32px; height: 21px; fill: #757575; }
.start {
  justify-self: end;
  margin-right: 41px;
  color: #00a32e;
  font-size: 37px;
  font-weight: 500;
}

/* route list */
.route { list-style: none; margin: 0; padding: 19px 27px 0; }
.row { display: flex; gap: 41px; padding-left: 36px; }
.link { width: 3px; height: 23px; margin-left: 88px; background: #b5b5b5; }
.raised {
  display: flex;
  align-items: center;
  height: 96px;
  border: 0;
  border-radius: 4px;
  background: #fff;
  box-shadow: 0 3px 5px rgba(0, 0, 0, .28);
  color: #757575;
  font: 37px Roboto, "Liberation Sans", sans-serif;
  cursor: pointer;
}
.raised svg { fill: #6e6e6e; }
.add { justify-content: center; width: 106px; padding: 0; }
.add svg { width: 37px; height: 37px; }
.leg { width: 592px; padding: 0 53px 0 32px; gap: 41px; box-shadow: 0 5px 5px rgba(0, 0, 0, .3); }
.car { width: 66px; height: 52px; }
.leg .next { width: 20px; height: 31px; margin-left: auto; }
.card {
  display: flex;
  align-items: center;
  height: 184px;
  padding: 0 21px 0 61px;
  border-radius: 4px;
  background: #fff;
}
.stop {
  display: flex;
  flex: 1;
  flex-direction: column;
  align-self: start;
  padding: 31px 0 0 82px;
}
h2 { font-weight: 400; line-height: 63px; }
.stop a { color: #00a32e; font-size: 37px; font-weight: 500; line-height: 66px; text-decoration: none; }

.swap {
  display: flex;
  align-items: center;
  gap: 84px;
  width: 100%;
  height: 126px;
  margin-top: 68px;
  padding-left: 63px;
}
.swap .icon { fill: #00a32e; }
```
